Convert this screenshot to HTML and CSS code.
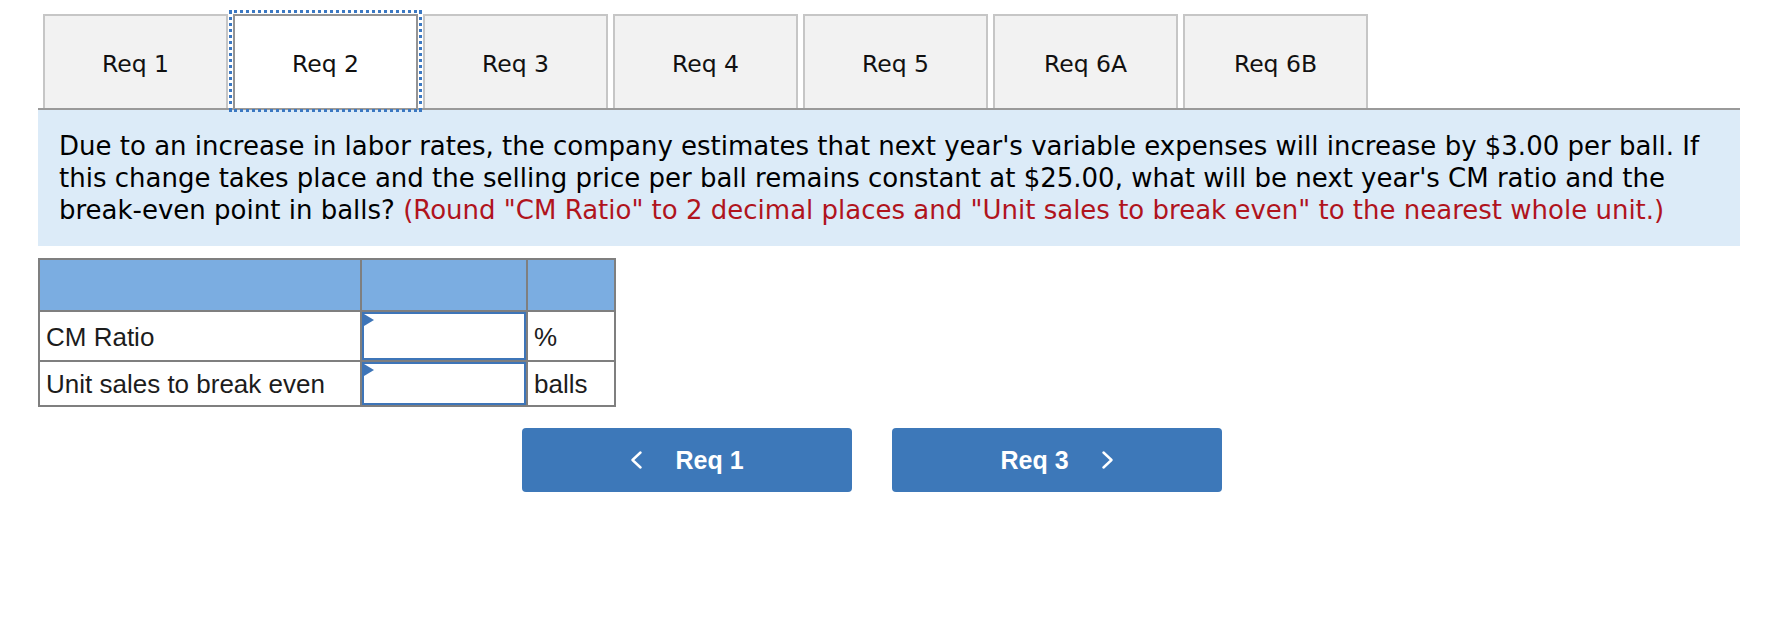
FILE: index.html
```html
<!DOCTYPE html>
<html lang="en">
<head>
<meta charset="utf-8">
<title>Req 2</title>
<link rel="stylesheet" href="styles.css">
</head>
<body>
<div class="page">
  <div class="tabs">
    <div class="tab">Req 1</div>
    <div class="tab active">Req 2</div>
    <div class="tab">Req 3</div>
    <div class="tab">Req 4</div>
    <div class="tab">Req 5</div>
    <div class="tab">Req 6A</div>
    <div class="tab">Req 6B</div>
  </div>
  <div class="prompt">Due to an increase in labor rates, the company estimates that next year's variable expenses will increase by $3.00 per ball. If this change takes place and the selling price per ball remains constant at $25.00, what will be next year's CM ratio and the break-even point in balls? <span class="note">(Round "CM Ratio" to 2 decimal places and "Unit sales to break even" to the nearest whole unit.)</span></div>
  <div class="answer">
    <div class="cell head"></div>
    <div class="cell head"></div>
    <div class="cell head"></div>
    <div class="cell">CM Ratio</div>
    <div class="cell field"><input type="text" class="entry" aria-label="CM Ratio"></div>
    <div class="cell">%</div>
    <div class="cell">Unit sales to break even</div>
    <div class="cell field"><input type="text" class="entry" aria-label="Unit sales to break even"></div>
    <div class="cell">balls</div>
  </div>
  <div class="nav">
    <button class="nav-btn" type="button">
      <svg class="chev" width="12" height="18" viewBox="0 0 12 18"><path d="M10.5 1.5 L2.5 9 L10.5 16.5" fill="none" stroke="#fff" stroke-width="2.4" stroke-linecap="round" stroke-linejoin="round"/></svg>
      <span>Req 1</span>
    </button>
    <button class="nav-btn" type="button">
      <span>Req 3</span>
      <svg class="chev" width="12" height="18" viewBox="0 0 12 18"><path d="M1.5 1.5 L9.5 9 L1.5 16.5" fill="none" stroke="#fff" stroke-width="2.4" stroke-linecap="round" stroke-linejoin="round"/></svg>
    </button>
  </div>
</div>
</body>
</html>
```
FILE: styles.css
```css
html, body {
  margin: 0;
  padding: 0;
  background: #fff;
}

.page {
  margin-left: 38px;
  width: 1702px;
  padding-top: 14px;
}

.tabs {
  display: flex;
  gap: 5px;
  padding-left: 5px;
  height: 94px;
}

.tab {
  box-sizing: border-box;
  width: 185px;
  height: 94px;
  border: 2px solid #c6c6c6;
  border-bottom: none;
  background: #f2f2f2;
  display: flex;
  align-items: center;
  justify-content: center;
  padding-top: 4px;
  font-family: "DejaVu Sans", Verdana, sans-serif;
  font-size: 23.5px;
  color: #111;
}

.tab.active {
  background: #fff;
  border-color: #949494;
  outline: 3px dotted #3b78c2;
  outline-offset: 1px;
  position: relative;
  z-index: 1;
}

.prompt {
  border-top: 2px solid #9a9a9a;
  background: #dcebf8;
  padding: 20px 21px;
  font-family: "DejaVu Sans", Verdana, sans-serif;
  font-size: 26px;
  line-height: 32px;
  color: #000;
}

.note {
  color: #b0141d;
}

.answer {
  margin-top: 12px;
  display: grid;
  grid-template-columns: 320px 164px 86px;
  grid-template-rows: 50px 48px 43px;
  gap: 2px;
  padding: 2px;
  background: #7f7f7f;
  width: max-content;
}

.cell {
  background: #fff;
  display: flex;
  align-items: center;
  padding-left: 6px;
  padding-top: 2px;
  font-family: "Liberation Sans", Arial, sans-serif;
  font-size: 26px;
  color: #1c1c1c;
}

.cell.head {
  background: #7badE1;
}

.cell.field {
  padding: 0;
  position: relative;
  align-items: stretch;
}

.entry {
  box-sizing: border-box;
  width: 100%;
  height: 100%;
  margin: 0;
  border: 2px solid #3e75b8;
  background: #fff;
  outline: none;
  font: inherit;
}

.cell.field::before {
  content: "";
  position: absolute;
  left: 2px;
  top: 2px;
  width: 0;
  height: 0;
  border-left: 10px solid #3e75b8;
  border-top: 6px solid transparent;
  border-bottom: 6px solid transparent;
}

.nav {
  margin-top: 21px;
  display: flex;
  gap: 40px;
  padding-left: 484px;
}

.nav-btn {
  width: 330px;
  height: 64px;
  border: none;
  border-radius: 4px;
  background: #3d78b9;
  color: #fff;
  display: flex;
  align-items: center;
  justify-content: center;
  gap: 33px;
  padding: 0;
  font-family: "Liberation Sans", Arial, sans-serif;
  font-weight: bold;
  font-size: 25px;
}

.chev {
  display: block;
}
```
